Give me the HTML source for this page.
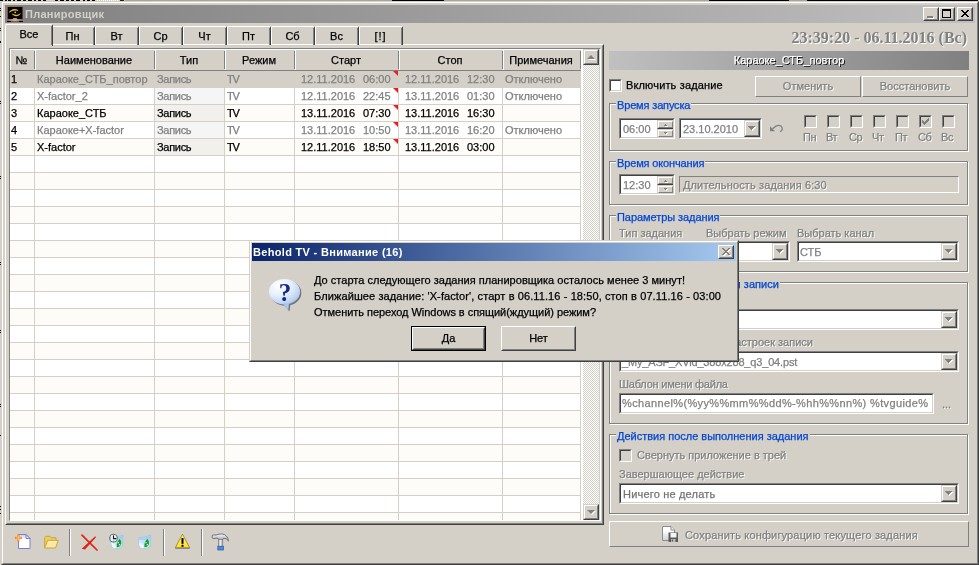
<!DOCTYPE html><html><head><meta charset="utf-8"><title>Планировщик</title><style>
*{margin:0;padding:0;box-sizing:border-box}
html,body{width:979px;height:565px;overflow:hidden}
body{background:#d4d0c8;font-family:"Liberation Sans",sans-serif;font-size:11px;color:#000;position:relative;will-change:transform;-webkit-text-stroke:0.25px}
#ttl,#dttl,#clock{-webkit-text-stroke:0}
.a{position:absolute}
.t{position:absolute;white-space:nowrap;line-height:13px;height:13px}
.dis{color:#808080;text-shadow:1px 1px 0 #fff}
.g{color:#808080}
.blue{color:#0046d5}
.win{position:absolute;border:1px solid;border-color:#d4d0c8 #404040 #404040 #d4d0c8}
.win:before{content:"";position:absolute;left:0;top:0;right:0;bottom:0;border:1px solid;border-color:#fff #808080 #808080 #fff}
.btn{position:absolute;background:#d4d0c8;border:1px solid;border-color:#fff #404040 #404040 #fff}
.btn:before{content:"";position:absolute;left:0;top:0;right:0;bottom:0;border:1px solid;border-color:#d4d0c8 #808080 #808080 #d4d0c8}
.sbtn{position:absolute;background:#d4d0c8;border:1px solid;border-color:#d4d0c8 #404040 #404040 #d4d0c8}
.sbtn:before{content:"";position:absolute;left:0;top:0;right:0;bottom:0;border:1px solid;border-color:#fff #808080 #808080 #fff}
.flat{position:absolute;background:#d4d0c8;border:1px solid;border-color:#fff #808080 #808080 #fff}
.sunk{position:absolute;background:#fff;border:1px solid;border-color:#808080 #fff #fff #808080}
.sunk:before{content:"";position:absolute;left:0;top:0;right:0;bottom:0;border:1px solid;border-color:#404040 #d4d0c8 #d4d0c8 #404040}
.gb{position:absolute;border:1px solid #808080;box-shadow:1px 1px 0 #fff, inset 1px 1px 0 #fff}
.gbt{position:absolute;background:#d4d0c8;white-space:nowrap;line-height:13px;height:13px;color:#0046d5;padding:0 1px}
.cb{position:absolute;width:13px;height:13px;background:#fff;border:1px solid;border-color:#808080 #fff #fff #808080}
.cb:before{content:"";position:absolute;left:0;top:0;right:0;bottom:0;border:1px solid;border-color:#404040 #d4d0c8 #d4d0c8 #404040}
.cb.d{background:#d4d0c8}
.tab{position:absolute;top:26px;height:19px;width:44px;border-top:1px solid #fff;border-left:1px solid #fff;border-right:1px solid #404040;border-radius:2px 2px 0 0;text-align:center;line-height:19px;padding-right:1px}
.tab:before{content:"";position:absolute;right:0;top:1px;bottom:0;width:1px;background:#808080}
.hd{position:absolute;top:49px;height:21px;border-top:1px solid #fff;border-left:1px solid #fff;text-align:center;line-height:21px;padding-right:3px}
.hd:after{content:"";position:absolute;right:0;top:1px;height:18px;width:1px;background:#808080}
.row{position:absolute;left:10px;width:571px;height:17px;border-bottom:1px solid #d4d0c8;overflow:hidden}
.c{position:absolute;top:0;height:16px;line-height:17px;white-space:nowrap;padding-left:2px;border-left:1px solid #d4d0c8;overflow:hidden}
.tri{position:absolute;width:0;height:0;border-top:5px solid #ee1c1c;border-left:5px solid transparent}
.arrow{position:absolute;width:0;height:0;border-left:4px solid transparent;border-right:4px solid transparent;border-top:4px solid #000}
</style></head><body>
<div class="a" style="left:0;top:0;width:979px;height:1px;background:#d4d0c8"></div>
<div class="a" style="left:125px;top:0;width:853px;height:1px;background:#a9a69f"></div>
<div class="a" style="left:392px;top:0;width:52px;height:1px;background:#000"></div>
<div class="a" style="left:709px;top:0;width:80px;height:1px;background:#000"></div>
<div class="a" style="left:807px;top:0;width:171px;height:1px;background:#000"></div>
<div class="a" style="left:0px;top:0;width:3px;height:1px;background:#000"></div>
<div class="a" style="left:5px;top:0;width:2px;height:1px;background:#000"></div>
<div class="a" style="left:8px;top:0;width:3px;height:1px;background:#000"></div>
<div class="a" style="left:13px;top:0;width:2px;height:1px;background:#000"></div>
<div class="a" style="left:17px;top:0;width:4px;height:1px;background:#000"></div>
<div class="a" style="left:23px;top:0;width:3px;height:1px;background:#000"></div>
<div class="a" style="left:28px;top:0;width:4px;height:1px;background:#000"></div>
<div class="a" style="left:34px;top:0;width:2px;height:1px;background:#000"></div>
<div class="a" style="left:38px;top:0;width:3px;height:1px;background:#000"></div>
<div class="a" style="left:43px;top:0;width:3px;height:1px;background:#000"></div>
<div class="a" style="left:55px;top:0;width:3px;height:1px;background:#000"></div>
<div class="a" style="left:60px;top:0;width:4px;height:1px;background:#000"></div>
<div class="a" style="left:66px;top:0;width:3px;height:1px;background:#000"></div>
<div class="a" style="left:71px;top:0;width:3px;height:1px;background:#000"></div>
<div class="a" style="left:76px;top:0;width:4px;height:1px;background:#000"></div>
<div class="a" style="left:83px;top:0;width:2px;height:1px;background:#000"></div>
<div class="a" style="left:87px;top:0;width:3px;height:1px;background:#000"></div>
<div class="a" style="left:92px;top:0;width:3px;height:1px;background:#000"></div>
<div class="a" style="left:97px;top:0;width:1px;height:1px;background:#fff"></div>
<div class="a" style="left:99px;top:0;width:1px;height:1px;background:#fff"></div>
<div class="a" style="left:101px;top:0;width:1px;height:1px;background:#fff"></div>
<div class="a" style="left:103px;top:0;width:1px;height:1px;background:#fff"></div>
<div class="a" style="left:105px;top:0;width:1px;height:1px;background:#fff"></div>
<div class="a" style="left:107px;top:0;width:1px;height:1px;background:#fff"></div>
<div class="a" style="left:109px;top:0;width:1px;height:1px;background:#fff"></div>
<div class="a" style="left:111px;top:0;width:1px;height:1px;background:#fff"></div>
<div class="a" style="left:113px;top:0;width:1px;height:1px;background:#fff"></div>
<div class="a" style="left:115px;top:0;width:1px;height:1px;background:#fff"></div>
<div class="a" style="left:117px;top:0;width:1px;height:1px;background:#fff"></div>
<div class="a" style="left:120px;top:0;width:4px;height:1px;background:#202020"></div>
<div class="a" style="left:0;top:8px;width:1px;height:1px;background:#111"></div>
<div class="a" style="left:0;top:10px;width:1px;height:1px;background:#111"></div>
<div class="a" style="left:0;top:16px;width:1px;height:1px;background:#111"></div>
<div class="a" style="left:0;top:28px;width:1px;height:1px;background:#111"></div>
<div class="a" style="left:0;top:30px;width:1px;height:1px;background:#111"></div>
<div class="a" style="left:0;top:41px;width:1px;height:1px;background:#111"></div>
<div class="a" style="left:0;top:42px;width:1px;height:1px;background:#111"></div>
<div class="a" style="left:0;top:101px;width:1px;height:1px;background:#111"></div>
<div class="a" style="left:0;top:103px;width:1px;height:1px;background:#111"></div>
<div class="a" style="left:0;top:176px;width:1px;height:1px;background:#111"></div>
<div class="a" style="left:0;top:178px;width:1px;height:1px;background:#111"></div>
<div class="a" style="left:0;top:262px;width:1px;height:1px;background:#111"></div>
<div class="a" style="left:0;top:264px;width:1px;height:1px;background:#111"></div>
<div class="a" style="left:0;top:330px;width:1px;height:1px;background:#111"></div>
<div class="a" style="left:0;top:332px;width:1px;height:1px;background:#111"></div>
<div class="a" style="left:0;top:404px;width:1px;height:1px;background:#111"></div>
<div class="a" style="left:0;top:406px;width:1px;height:1px;background:#111"></div>
<div class="a" style="left:0;top:435px;width:1px;height:1px;background:#111"></div>
<div class="a" style="left:0;top:506px;width:1px;height:1px;background:#111"></div>
<div class="a" style="left:0;top:509px;width:1px;height:1px;background:#111"></div>
<div class="a" style="left:0;top:513px;width:1px;height:1px;background:#111"></div>
<div class="win" style="left:1px;top:1px;width:978px;height:564px"></div>
<div class="a" style="left:5px;top:5px;width:970px;height:18px;background:linear-gradient(90deg,#808080,#c0c0c0)"></div>
<svg class="a" style="left:7px;top:6px" width="16" height="16" viewBox="0 0 16 16"><defs><linearGradient id="ib" x1="0" x2="1"><stop offset="0" stop-color="#9a6048"/><stop offset="0.5" stop-color="#c9b0ae"/><stop offset="1" stop-color="#8a5a48"/></linearGradient><linearGradient id="it" x1="0" x2="1"><stop offset="0" stop-color="#b86c48"/><stop offset="1" stop-color="#77706c"/></linearGradient></defs><rect width="16" height="16" fill="#000"/><rect width="16" height="1" fill="url(#it)"/><rect x="0" y="1" width="1" height="12" fill="#7a5044"/><rect x="15" y="1" width="1" height="12" fill="#4a3a38"/><rect x="0" y="13" width="16" height="2" fill="url(#ib)"/><rect x="4" y="15" width="8" height="1" fill="#6a6462"/><rect x="6" y="12" width="4" height="1" fill="#c2a02e"/><path d="M1.800 6.800C2.500 4.500 5.500 2.600 8.500 3C10.200 3.300 11.200 4.200 11.600 5.200C10 4.300 7.500 4.200 5.500 5C4 5.600 2.800 6.500 1.800 6.800Z" fill="#d9b045"/><path d="M4.600 7.300C6.500 8.600 9 9 11 8.400C12.300 8 13.200 7.300 13.800 6.700C13.600 8.600 11.500 10.300 9 10.200C7 10.100 5.300 9 4.600 7.300Z" fill="#d9b045"/><circle cx="8.300" cy="6.300" r="0.900" fill="#e6c25a"/></svg>
<div class="t" style="left:25px;top:8px;font-weight:bold;color:#d4d0c8;font-size:11px;letter-spacing:0.283px;" id="ttl">Планировщик</div>
<div class="btn" style="left:923px;top:7px;width:16px;height:14px"></div>
<div class="btn" style="left:939px;top:7px;width:16px;height:14px"></div>
<div class="btn" style="left:957px;top:7px;width:16px;height:14px"></div>
<div class="a" style="left:928px;top:17px;width:6px;height:2px;background:#fff"></div><div class="a" style="left:927px;top:16px;width:6px;height:2px;background:#808080"></div>
<div class="a" style="left:942px;top:9px;width:9px;height:9px;border:1px solid #000;border-top-width:2px"></div>
<svg class="a" style="left:961px;top:10px" width="8" height="7" viewBox="0 0 8 7" shape-rendering="crispEdges"><path d="M0 0h2v1h-2zM6 0h2v1h-2zM1 1h2v1h-2zM5 1h2v1h-2zM2 2h4v1h-4zM3 3h2v1h-2zM2 4h4v1h-4zM1 5h2v1h-2zM5 5h2v1h-2zM0 6h2v1h-2zM6 6h2v1h-2z" fill="#000"/></svg>
<div class="t" id="clock" style="right:12px;top:28px;height:20px;line-height:20px;font-family:'Liberation Serif',serif;font-weight:bold;font-size:16px;color:#808080;text-shadow:1px 1px 0 #fff">23:39:20 - 06.11.2016 (Вс)</div>
<div class="a" style="left:5px;top:44px;width:599px;height:481px;border:1px solid;border-color:#fff #404040 #404040 #fff"></div>
<div class="a" style="left:6px;top:45px;width:597px;height:479px;border:1px solid;border-color:#d4d0c8 #808080 #808080 #d4d0c8"></div>
<div class="tab" style="left:51px">Пн</div>
<div class="tab" style="left:95px">Вт</div>
<div class="tab" style="left:139px">Ср</div>
<div class="tab" style="left:183px">Чт</div>
<div class="tab" style="left:227px">Пт</div>
<div class="tab" style="left:271px">Сб</div>
<div class="tab" style="left:315px">Вс</div>
<div class="tab" style="left:359px;letter-spacing:1px">[!]</div>
<div class="a" style="left:5px;top:24px;width:48px;height:22px;background:#d4d0c8;border-top:1px solid #fff;border-left:1px solid #fff;border-right:1px solid #404040;border-radius:2px 2px 0 0;text-align:center;line-height:19px"><div class="a" style="right:0;top:1px;bottom:1px;width:1px;background:#808080"></div>Все</div>
<div class="a" style="left:9px;top:48px;width:592px;height:473px;border:1px solid;border-color:#808080 #fff #fff #808080;background:#fff"></div>
<div class="a" style="left:599px;top:49px;width:1px;height:471px;background:#d4d0c8"></div>
<div class="a" style="left:10px;top:49px;width:571px;height:22px;background:#d4d0c8;border-bottom:1px solid #808080"></div>
<div class="hd" style="left:10px;width:25px">№</div>
<div class="hd" style="left:35px;width:120px">Наименование</div>
<div class="hd" style="left:155px;width:70px">Тип</div>
<div class="hd" style="left:225px;width:70px">Режим</div>
<div class="hd" style="left:295px;width:104px">Старт</div>
<div class="hd" style="left:399px;width:104px">Стоп</div>
<div class="hd" style="left:503px;width:78px">Примечания</div>
<div class="row" style="top:71px;height:17px;background:#d4d0c8;border-bottom-color:#d4d0c8;">
<div class="c" style="left:0;width:24px;border-left:0;padding-left:1px;color:#000">1</div>
<div class="c" style="left:24px;width:120px;color:#808080;border-left-color:#d4d0c8;">Караоке_СТБ_повтор</div>
<div class="c" style="left:144px;width:70px;color:#808080;border-left-color:#d4d0c8;letter-spacing:-0.3px;">Запись</div>
<div class="c" style="left:214px;width:70px;color:#808080;border-left-color:#d4d0c8;letter-spacing:-1.2px;">TV</div>
<div class="c" style="left:284px;width:104px;color:#808080;border-left-color:#d4d0c8;"><span class="a" style="left:6px">12.11.2016</span><span class="a" style="left:68px">06:00</span><div class="tri" style="right:0;top:0"></div></div>
<div class="c" style="left:388px;width:104px;color:#808080;border-left-color:#d4d0c8;"><span class="a" style="left:6px">12.11.2016</span><span class="a" style="left:68px">12:30</span></div>
<div class="c" style="left:492px;width:79px;color:#808080;border-left-color:#d4d0c8;border-right:1px solid #d4d0c8;">Отключено</div>
</div>
<div class="row" style="top:88px;height:17px;background:#fff;border-bottom-color:#d4d0c8;">
<div class="c" style="left:0;width:24px;border-left:0;padding-left:1px;color:#000">2</div>
<div class="c" style="left:24px;width:120px;color:#808080;border-left-color:#d4d0c8;">X-factor_2</div>
<div class="c" style="left:144px;width:70px;color:#808080;border-left-color:#d4d0c8;background:#f5f5f5;letter-spacing:-0.3px;">Запись</div>
<div class="c" style="left:214px;width:70px;color:#808080;border-left-color:#d4d0c8;letter-spacing:-1.2px;">TV</div>
<div class="c" style="left:284px;width:104px;color:#808080;border-left-color:#d4d0c8;"><span class="a" style="left:6px">12.11.2016</span><span class="a" style="left:68px">22:45</span><div class="tri" style="right:0;top:0"></div></div>
<div class="c" style="left:388px;width:104px;color:#808080;border-left-color:#d4d0c8;"><span class="a" style="left:6px">13.11.2016</span><span class="a" style="left:68px">01:30</span></div>
<div class="c" style="left:492px;width:79px;color:#808080;border-left-color:#d4d0c8;border-right:1px solid #d4d0c8;">Отключено</div>
</div>
<div class="row" style="top:105px;height:17px;background:#fdfcf8;border-bottom-color:#d4d0c8;">
<div class="c" style="left:0;width:24px;border-left:0;padding-left:1px;color:#000">3</div>
<div class="c" style="left:24px;width:120px;color:#000;border-left-color:#d4d0c8;">Караоке_СТБ</div>
<div class="c" style="left:144px;width:70px;color:#000;border-left-color:#d4d0c8;background:#f1f0ec;letter-spacing:-0.3px;">Запись</div>
<div class="c" style="left:214px;width:70px;color:#000;border-left-color:#d4d0c8;letter-spacing:-1.2px;">TV</div>
<div class="c" style="left:284px;width:104px;color:#000;border-left-color:#d4d0c8;"><span class="a" style="left:6px">13.11.2016</span><span class="a" style="left:68px">07:30</span><div class="tri" style="right:0;top:0"></div></div>
<div class="c" style="left:388px;width:104px;color:#000;border-left-color:#d4d0c8;"><span class="a" style="left:6px">13.11.2016</span><span class="a" style="left:68px">16:30</span></div>
<div class="c" style="left:492px;width:79px;color:#000;border-left-color:#d4d0c8;border-right:1px solid #d4d0c8;"></div>
</div>
<div class="row" style="top:122px;height:17px;background:#fff;border-bottom-color:#d4d0c8;">
<div class="c" style="left:0;width:24px;border-left:0;padding-left:1px;color:#000">4</div>
<div class="c" style="left:24px;width:120px;color:#808080;border-left-color:#d4d0c8;">Караоке+X-factor</div>
<div class="c" style="left:144px;width:70px;color:#808080;border-left-color:#d4d0c8;background:#f5f5f5;letter-spacing:-0.3px;">Запись</div>
<div class="c" style="left:214px;width:70px;color:#808080;border-left-color:#d4d0c8;letter-spacing:-1.2px;">TV</div>
<div class="c" style="left:284px;width:104px;color:#808080;border-left-color:#d4d0c8;"><span class="a" style="left:6px">13.11.2016</span><span class="a" style="left:68px">10:50</span><div class="tri" style="right:0;top:0"></div></div>
<div class="c" style="left:388px;width:104px;color:#808080;border-left-color:#d4d0c8;"><span class="a" style="left:6px">13.11.2016</span><span class="a" style="left:68px">16:20</span></div>
<div class="c" style="left:492px;width:79px;color:#808080;border-left-color:#d4d0c8;border-right:1px solid #d4d0c8;">Отключено</div>
</div>
<div class="row" style="top:139px;height:17px;background:#fdfcf8;border-bottom-color:#d4d0c8;">
<div class="c" style="left:0;width:24px;border-left:0;padding-left:1px;color:#000">5</div>
<div class="c" style="left:24px;width:120px;color:#000;border-left-color:#d4d0c8;">X-factor</div>
<div class="c" style="left:144px;width:70px;color:#000;border-left-color:#d4d0c8;background:#f1f0ec;letter-spacing:-0.3px;">Запись</div>
<div class="c" style="left:214px;width:70px;color:#000;border-left-color:#d4d0c8;letter-spacing:-1.2px;">TV</div>
<div class="c" style="left:284px;width:104px;color:#000;border-left-color:#d4d0c8;"><span class="a" style="left:6px">12.11.2016</span><span class="a" style="left:68px">18:50</span><div class="tri" style="right:0;top:0"></div></div>
<div class="c" style="left:388px;width:104px;color:#000;border-left-color:#d4d0c8;"><span class="a" style="left:6px">13.11.2016</span><span class="a" style="left:68px">03:00</span></div>
<div class="c" style="left:492px;width:79px;color:#000;border-left-color:#d4d0c8;border-right:1px solid #d4d0c8;"></div>
</div>
<div class="row" style="top:156px;height:17px;background:#fff;border-bottom-color:#d4d0c8;">
<div class="c" style="left:24px;width:120px;color:#000;border-left-color:#d4d0c8;"></div>
<div class="c" style="left:144px;width:70px;color:#000;border-left-color:#d4d0c8;letter-spacing:-0.3px;"></div>
<div class="c" style="left:214px;width:70px;color:#000;border-left-color:#d4d0c8;letter-spacing:-1.2px;"></div>
<div class="c" style="left:284px;width:104px;color:#000;border-left-color:#d4d0c8;"></div>
<div class="c" style="left:388px;width:104px;color:#000;border-left-color:#d4d0c8;"></div>
<div class="c" style="left:492px;width:79px;color:#000;border-left-color:#d4d0c8;border-right:1px solid #d4d0c8;"></div>
</div>
<div class="row" style="top:173px;height:17px;background:#fdfcf8;border-bottom-color:#d4d0c8;">
<div class="c" style="left:24px;width:120px;color:#000;border-left-color:#d4d0c8;"></div>
<div class="c" style="left:144px;width:70px;color:#000;border-left-color:#d4d0c8;letter-spacing:-0.3px;"></div>
<div class="c" style="left:214px;width:70px;color:#000;border-left-color:#d4d0c8;letter-spacing:-1.2px;"></div>
<div class="c" style="left:284px;width:104px;color:#000;border-left-color:#d4d0c8;"></div>
<div class="c" style="left:388px;width:104px;color:#000;border-left-color:#d4d0c8;"></div>
<div class="c" style="left:492px;width:79px;color:#000;border-left-color:#d4d0c8;border-right:1px solid #d4d0c8;"></div>
</div>
<div class="row" style="top:190px;height:17px;background:#fff;border-bottom-color:#d4d0c8;">
<div class="c" style="left:24px;width:120px;color:#000;border-left-color:#d4d0c8;"></div>
<div class="c" style="left:144px;width:70px;color:#000;border-left-color:#d4d0c8;letter-spacing:-0.3px;"></div>
<div class="c" style="left:214px;width:70px;color:#000;border-left-color:#d4d0c8;letter-spacing:-1.2px;"></div>
<div class="c" style="left:284px;width:104px;color:#000;border-left-color:#d4d0c8;"></div>
<div class="c" style="left:388px;width:104px;color:#000;border-left-color:#d4d0c8;"></div>
<div class="c" style="left:492px;width:79px;color:#000;border-left-color:#d4d0c8;border-right:1px solid #d4d0c8;"></div>
</div>
<div class="row" style="top:207px;height:17px;background:#fdfcf8;border-bottom-color:#d4d0c8;">
<div class="c" style="left:24px;width:120px;color:#000;border-left-color:#d4d0c8;"></div>
<div class="c" style="left:144px;width:70px;color:#000;border-left-color:#d4d0c8;letter-spacing:-0.3px;"></div>
<div class="c" style="left:214px;width:70px;color:#000;border-left-color:#d4d0c8;letter-spacing:-1.2px;"></div>
<div class="c" style="left:284px;width:104px;color:#000;border-left-color:#d4d0c8;"></div>
<div class="c" style="left:388px;width:104px;color:#000;border-left-color:#d4d0c8;"></div>
<div class="c" style="left:492px;width:79px;color:#000;border-left-color:#d4d0c8;border-right:1px solid #d4d0c8;"></div>
</div>
<div class="row" style="top:224px;height:17px;background:#fff;border-bottom-color:#d4d0c8;">
<div class="c" style="left:24px;width:120px;color:#000;border-left-color:#d4d0c8;"></div>
<div class="c" style="left:144px;width:70px;color:#000;border-left-color:#d4d0c8;letter-spacing:-0.3px;"></div>
<div class="c" style="left:214px;width:70px;color:#000;border-left-color:#d4d0c8;letter-spacing:-1.2px;"></div>
<div class="c" style="left:284px;width:104px;color:#000;border-left-color:#d4d0c8;"></div>
<div class="c" style="left:388px;width:104px;color:#000;border-left-color:#d4d0c8;"></div>
<div class="c" style="left:492px;width:79px;color:#000;border-left-color:#d4d0c8;border-right:1px solid #d4d0c8;"></div>
</div>
<div class="row" style="top:241px;height:17px;background:#fdfcf8;border-bottom-color:#d4d0c8;">
<div class="c" style="left:24px;width:120px;color:#000;border-left-color:#d4d0c8;"></div>
<div class="c" style="left:144px;width:70px;color:#000;border-left-color:#d4d0c8;letter-spacing:-0.3px;"></div>
<div class="c" style="left:214px;width:70px;color:#000;border-left-color:#d4d0c8;letter-spacing:-1.2px;"></div>
<div class="c" style="left:284px;width:104px;color:#000;border-left-color:#d4d0c8;"></div>
<div class="c" style="left:388px;width:104px;color:#000;border-left-color:#d4d0c8;"></div>
<div class="c" style="left:492px;width:79px;color:#000;border-left-color:#d4d0c8;border-right:1px solid #d4d0c8;"></div>
</div>
<div class="row" style="top:258px;height:17px;background:#fff;border-bottom-color:#d4d0c8;">
<div class="c" style="left:24px;width:120px;color:#000;border-left-color:#d4d0c8;"></div>
<div class="c" style="left:144px;width:70px;color:#000;border-left-color:#d4d0c8;letter-spacing:-0.3px;"></div>
<div class="c" style="left:214px;width:70px;color:#000;border-left-color:#d4d0c8;letter-spacing:-1.2px;"></div>
<div class="c" style="left:284px;width:104px;color:#000;border-left-color:#d4d0c8;"></div>
<div class="c" style="left:388px;width:104px;color:#000;border-left-color:#d4d0c8;"></div>
<div class="c" style="left:492px;width:79px;color:#000;border-left-color:#d4d0c8;border-right:1px solid #d4d0c8;"></div>
</div>
<div class="row" style="top:275px;height:17px;background:#fdfcf8;border-bottom-color:#d4d0c8;">
<div class="c" style="left:24px;width:120px;color:#000;border-left-color:#d4d0c8;"></div>
<div class="c" style="left:144px;width:70px;color:#000;border-left-color:#d4d0c8;letter-spacing:-0.3px;"></div>
<div class="c" style="left:214px;width:70px;color:#000;border-left-color:#d4d0c8;letter-spacing:-1.2px;"></div>
<div class="c" style="left:284px;width:104px;color:#000;border-left-color:#d4d0c8;"></div>
<div class="c" style="left:388px;width:104px;color:#000;border-left-color:#d4d0c8;"></div>
<div class="c" style="left:492px;width:79px;color:#000;border-left-color:#d4d0c8;border-right:1px solid #d4d0c8;"></div>
</div>
<div class="row" style="top:292px;height:17px;background:#fff;border-bottom-color:#d4d0c8;">
<div class="c" style="left:24px;width:120px;color:#000;border-left-color:#d4d0c8;"></div>
<div class="c" style="left:144px;width:70px;color:#000;border-left-color:#d4d0c8;letter-spacing:-0.3px;"></div>
<div class="c" style="left:214px;width:70px;color:#000;border-left-color:#d4d0c8;letter-spacing:-1.2px;"></div>
<div class="c" style="left:284px;width:104px;color:#000;border-left-color:#d4d0c8;"></div>
<div class="c" style="left:388px;width:104px;color:#000;border-left-color:#d4d0c8;"></div>
<div class="c" style="left:492px;width:79px;color:#000;border-left-color:#d4d0c8;border-right:1px solid #d4d0c8;"></div>
</div>
<div class="row" style="top:309px;height:17px;background:#fdfcf8;border-bottom-color:#d4d0c8;">
<div class="c" style="left:24px;width:120px;color:#000;border-left-color:#d4d0c8;"></div>
<div class="c" style="left:144px;width:70px;color:#000;border-left-color:#d4d0c8;letter-spacing:-0.3px;"></div>
<div class="c" style="left:214px;width:70px;color:#000;border-left-color:#d4d0c8;letter-spacing:-1.2px;"></div>
<div class="c" style="left:284px;width:104px;color:#000;border-left-color:#d4d0c8;"></div>
<div class="c" style="left:388px;width:104px;color:#000;border-left-color:#d4d0c8;"></div>
<div class="c" style="left:492px;width:79px;color:#000;border-left-color:#d4d0c8;border-right:1px solid #d4d0c8;"></div>
</div>
<div class="row" style="top:326px;height:17px;background:#fff;border-bottom-color:#d4d0c8;">
<div class="c" style="left:24px;width:120px;color:#000;border-left-color:#d4d0c8;"></div>
<div class="c" style="left:144px;width:70px;color:#000;border-left-color:#d4d0c8;letter-spacing:-0.3px;"></div>
<div class="c" style="left:214px;width:70px;color:#000;border-left-color:#d4d0c8;letter-spacing:-1.2px;"></div>
<div class="c" style="left:284px;width:104px;color:#000;border-left-color:#d4d0c8;"></div>
<div class="c" style="left:388px;width:104px;color:#000;border-left-color:#d4d0c8;"></div>
<div class="c" style="left:492px;width:79px;color:#000;border-left-color:#d4d0c8;border-right:1px solid #d4d0c8;"></div>
</div>
<div class="row" style="top:343px;height:17px;background:#fdfcf8;border-bottom-color:#d4d0c8;">
<div class="c" style="left:24px;width:120px;color:#000;border-left-color:#d4d0c8;"></div>
<div class="c" style="left:144px;width:70px;color:#000;border-left-color:#d4d0c8;letter-spacing:-0.3px;"></div>
<div class="c" style="left:214px;width:70px;color:#000;border-left-color:#d4d0c8;letter-spacing:-1.2px;"></div>
<div class="c" style="left:284px;width:104px;color:#000;border-left-color:#d4d0c8;"></div>
<div class="c" style="left:388px;width:104px;color:#000;border-left-color:#d4d0c8;"></div>
<div class="c" style="left:492px;width:79px;color:#000;border-left-color:#d4d0c8;border-right:1px solid #d4d0c8;"></div>
</div>
<div class="row" style="top:360px;height:17px;background:#fff;border-bottom-color:#d4d0c8;">
<div class="c" style="left:24px;width:120px;color:#000;border-left-color:#d4d0c8;"></div>
<div class="c" style="left:144px;width:70px;color:#000;border-left-color:#d4d0c8;letter-spacing:-0.3px;"></div>
<div class="c" style="left:214px;width:70px;color:#000;border-left-color:#d4d0c8;letter-spacing:-1.2px;"></div>
<div class="c" style="left:284px;width:104px;color:#000;border-left-color:#d4d0c8;"></div>
<div class="c" style="left:388px;width:104px;color:#000;border-left-color:#d4d0c8;"></div>
<div class="c" style="left:492px;width:79px;color:#000;border-left-color:#d4d0c8;border-right:1px solid #d4d0c8;"></div>
</div>
<div class="row" style="top:377px;height:17px;background:#fdfcf8;border-bottom-color:#d4d0c8;">
<div class="c" style="left:24px;width:120px;color:#000;border-left-color:#d4d0c8;"></div>
<div class="c" style="left:144px;width:70px;color:#000;border-left-color:#d4d0c8;letter-spacing:-0.3px;"></div>
<div class="c" style="left:214px;width:70px;color:#000;border-left-color:#d4d0c8;letter-spacing:-1.2px;"></div>
<div class="c" style="left:284px;width:104px;color:#000;border-left-color:#d4d0c8;"></div>
<div class="c" style="left:388px;width:104px;color:#000;border-left-color:#d4d0c8;"></div>
<div class="c" style="left:492px;width:79px;color:#000;border-left-color:#d4d0c8;border-right:1px solid #d4d0c8;"></div>
</div>
<div class="row" style="top:394px;height:17px;background:#fff;border-bottom-color:#d4d0c8;">
<div class="c" style="left:24px;width:120px;color:#000;border-left-color:#d4d0c8;"></div>
<div class="c" style="left:144px;width:70px;color:#000;border-left-color:#d4d0c8;letter-spacing:-0.3px;"></div>
<div class="c" style="left:214px;width:70px;color:#000;border-left-color:#d4d0c8;letter-spacing:-1.2px;"></div>
<div class="c" style="left:284px;width:104px;color:#000;border-left-color:#d4d0c8;"></div>
<div class="c" style="left:388px;width:104px;color:#000;border-left-color:#d4d0c8;"></div>
<div class="c" style="left:492px;width:79px;color:#000;border-left-color:#d4d0c8;border-right:1px solid #d4d0c8;"></div>
</div>
<div class="row" style="top:411px;height:17px;background:#fdfcf8;border-bottom-color:#d4d0c8;">
<div class="c" style="left:24px;width:120px;color:#000;border-left-color:#d4d0c8;"></div>
<div class="c" style="left:144px;width:70px;color:#000;border-left-color:#d4d0c8;letter-spacing:-0.3px;"></div>
<div class="c" style="left:214px;width:70px;color:#000;border-left-color:#d4d0c8;letter-spacing:-1.2px;"></div>
<div class="c" style="left:284px;width:104px;color:#000;border-left-color:#d4d0c8;"></div>
<div class="c" style="left:388px;width:104px;color:#000;border-left-color:#d4d0c8;"></div>
<div class="c" style="left:492px;width:79px;color:#000;border-left-color:#d4d0c8;border-right:1px solid #d4d0c8;"></div>
</div>
<div class="row" style="top:428px;height:17px;background:#fff;border-bottom-color:#d4d0c8;">
<div class="c" style="left:24px;width:120px;color:#000;border-left-color:#d4d0c8;"></div>
<div class="c" style="left:144px;width:70px;color:#000;border-left-color:#d4d0c8;letter-spacing:-0.3px;"></div>
<div class="c" style="left:214px;width:70px;color:#000;border-left-color:#d4d0c8;letter-spacing:-1.2px;"></div>
<div class="c" style="left:284px;width:104px;color:#000;border-left-color:#d4d0c8;"></div>
<div class="c" style="left:388px;width:104px;color:#000;border-left-color:#d4d0c8;"></div>
<div class="c" style="left:492px;width:79px;color:#000;border-left-color:#d4d0c8;border-right:1px solid #d4d0c8;"></div>
</div>
<div class="row" style="top:445px;height:17px;background:#fdfcf8;border-bottom-color:#d4d0c8;">
<div class="c" style="left:24px;width:120px;color:#000;border-left-color:#d4d0c8;"></div>
<div class="c" style="left:144px;width:70px;color:#000;border-left-color:#d4d0c8;letter-spacing:-0.3px;"></div>
<div class="c" style="left:214px;width:70px;color:#000;border-left-color:#d4d0c8;letter-spacing:-1.2px;"></div>
<div class="c" style="left:284px;width:104px;color:#000;border-left-color:#d4d0c8;"></div>
<div class="c" style="left:388px;width:104px;color:#000;border-left-color:#d4d0c8;"></div>
<div class="c" style="left:492px;width:79px;color:#000;border-left-color:#d4d0c8;border-right:1px solid #d4d0c8;"></div>
</div>
<div class="row" style="top:462px;height:17px;background:#fff;border-bottom-color:#d4d0c8;">
<div class="c" style="left:24px;width:120px;color:#000;border-left-color:#d4d0c8;"></div>
<div class="c" style="left:144px;width:70px;color:#000;border-left-color:#d4d0c8;letter-spacing:-0.3px;"></div>
<div class="c" style="left:214px;width:70px;color:#000;border-left-color:#d4d0c8;letter-spacing:-1.2px;"></div>
<div class="c" style="left:284px;width:104px;color:#000;border-left-color:#d4d0c8;"></div>
<div class="c" style="left:388px;width:104px;color:#000;border-left-color:#d4d0c8;"></div>
<div class="c" style="left:492px;width:79px;color:#000;border-left-color:#d4d0c8;border-right:1px solid #d4d0c8;"></div>
</div>
<div class="row" style="top:479px;height:17px;background:#fdfcf8;border-bottom-color:#d4d0c8;">
<div class="c" style="left:24px;width:120px;color:#000;border-left-color:#d4d0c8;"></div>
<div class="c" style="left:144px;width:70px;color:#000;border-left-color:#d4d0c8;letter-spacing:-0.3px;"></div>
<div class="c" style="left:214px;width:70px;color:#000;border-left-color:#d4d0c8;letter-spacing:-1.2px;"></div>
<div class="c" style="left:284px;width:104px;color:#000;border-left-color:#d4d0c8;"></div>
<div class="c" style="left:388px;width:104px;color:#000;border-left-color:#d4d0c8;"></div>
<div class="c" style="left:492px;width:79px;color:#000;border-left-color:#d4d0c8;border-right:1px solid #d4d0c8;"></div>
</div>
<div class="row" style="top:496px;height:17px;background:#fff;border-bottom-color:#d4d0c8;">
<div class="c" style="left:24px;width:120px;color:#000;border-left-color:#d4d0c8;"></div>
<div class="c" style="left:144px;width:70px;color:#000;border-left-color:#d4d0c8;letter-spacing:-0.3px;"></div>
<div class="c" style="left:214px;width:70px;color:#000;border-left-color:#d4d0c8;letter-spacing:-1.2px;"></div>
<div class="c" style="left:284px;width:104px;color:#000;border-left-color:#d4d0c8;"></div>
<div class="c" style="left:388px;width:104px;color:#000;border-left-color:#d4d0c8;"></div>
<div class="c" style="left:492px;width:79px;color:#000;border-left-color:#d4d0c8;border-right:1px solid #d4d0c8;"></div>
</div>
<div class="row" style="top:513px;height:7px;background:#fdfcf8;border-bottom-color:#d4d0c8;border-bottom:0;">
<div class="c" style="left:24px;width:120px;color:#000;border-left-color:#d4d0c8;"></div>
<div class="c" style="left:144px;width:70px;color:#000;border-left-color:#d4d0c8;letter-spacing:-0.3px;"></div>
<div class="c" style="left:214px;width:70px;color:#000;border-left-color:#d4d0c8;letter-spacing:-1.2px;"></div>
<div class="c" style="left:284px;width:104px;color:#000;border-left-color:#d4d0c8;"></div>
<div class="c" style="left:388px;width:104px;color:#000;border-left-color:#d4d0c8;"></div>
<div class="c" style="left:492px;width:79px;color:#000;border-left-color:#d4d0c8;border-right:1px solid #d4d0c8;"></div>
</div>
<div class="a" style="left:583px;top:49px;width:16px;height:471px;background:#eae8e3;background-image:conic-gradient(#fff 25%,#d4d0c8 0 50%,#fff 0 75%,#d4d0c8 0);background-size:2px 2px"></div>
<div class="sbtn" style="left:583px;top:49px;width:16px;height:16px"></div>
<div class="a" style="left:588px;top:56px;width:0;height:0;border-left:4px solid transparent;border-right:4px solid transparent;border-bottom:4px solid #fff"></div><div class="a" style="left:587px;top:55px;width:0;height:0;border-left:4px solid transparent;border-right:4px solid transparent;border-bottom:4px solid #808080"></div>
<div class="sbtn" style="left:583px;top:504px;width:16px;height:16px"></div>
<div class="a" style="left:588px;top:511px;width:0;height:0;border-left:4px solid transparent;border-right:4px solid transparent;border-top:4px solid #fff"></div><div class="a" style="left:587px;top:510px;width:0;height:0;border-left:4px solid transparent;border-right:4px solid transparent;border-top:4px solid #808080"></div>
<div class="a" style="left:69px;top:529px;width:1px;height:27px;background:#808080"></div><div class="a" style="left:70px;top:529px;width:1px;height:27px;background:#fff"></div>
<div class="a" style="left:163px;top:529px;width:1px;height:27px;background:#808080"></div><div class="a" style="left:164px;top:529px;width:1px;height:27px;background:#fff"></div>
<div class="a" style="left:201px;top:529px;width:1px;height:27px;background:#808080"></div><div class="a" style="left:202px;top:529px;width:1px;height:27px;background:#fff"></div>
<svg class="a" style="left:14px;top:533px" width="18" height="17" viewBox="0 0 18 17"><defs><linearGradient id="pg" x1="0" y1="0" x2="0" y2="1"><stop offset="0" stop-color="#c2d2f2"/><stop offset="0.35" stop-color="#fff"/></linearGradient></defs><path d="M4.500 1.500H12L16 5.500V15.500H4.500Z" fill="url(#pg)" stroke="#7f7cc8"/><path d="M12 1.500V5.500H16Z" fill="#e4e9f8" stroke="#7f7cc8" stroke-linejoin="round"/><path d="M4.400 1.400v7M0.900 4.900h7" stroke="#f0861c" stroke-width="2.200"/><path d="M4.400 2.300v5.200M1.800 4.900h5.200" stroke="#ffdcae" stroke-width="0.700"/></svg>
<svg class="a" style="left:43px;top:535px" width="17" height="15" viewBox="0 0 17 15"><path d="M1.700 12.500V2.600L3 1.300H7L8.200 2.800H13V5.500" fill="#efce60" stroke="#c9a23a"/><path d="M1.700 13L4.600 5.400H15.300L12.500 13Z" fill="#fbe9a2" stroke="#c9a23a" stroke-linejoin="round"/><path d="M5.200 6.400H13.800" stroke="#fff6cc" stroke-width="0.800"/></svg>
<svg class="a" style="left:80px;top:534px" width="18" height="17" viewBox="0 0 18 17"><path d="M2 1.200L17 16" stroke="#e02010" stroke-width="1.700" stroke-linecap="round"/><path d="M15.200 2.300L16 3.200L5 15.600L1.700 14.800Z" fill="#e02010"/></svg>
<svg class="a" style="left:108px;top:533px" width="17" height="18" viewBox="0 0 17 18"><defs><linearGradient id="gl" x1="0" y1="1" x2="1" y2="0"><stop offset="0" stop-color="#eaf5ff"/><stop offset="0.5" stop-color="#c4e0f8"/><stop offset="1" stop-color="#a4d0f4"/></linearGradient></defs><g transform="translate(2.300,2)"><path d="M0.300 2.700L6 2.200L12.800 0.200L12.400 10.500Q11 13.300 8 13.600H3.800Q1.200 13 0.600 8Z" fill="url(#gl)" stroke="#8fc0ea" stroke-width="0.600"/><path d="M0.800 3.200L6 2.800L12.300 0.900L12.200 3.500Q6 5.500 0.900 5Z" fill="#9ccdf4" opacity="0.800"/><path d="M1 8Q4 7.500 6 11.500L5 13.200H3.800Q1.500 12.500 1 8Z" fill="#f2f9ff" opacity="0.900"/><path d="M9.300 3.800Q11.400 5.500 10.900 9Q10.200 12 6.500 12.300Q5.800 7.500 9.300 3.800Z" fill="#12a022"/><circle cx="8" cy="7.700" r="0.700" fill="#e8ffe8"/><circle cx="9.300" cy="9.800" r="0.800" fill="#e8ffe8"/></g><circle cx="5.500" cy="5.200" r="4" fill="#e6f2fe" stroke="#6c6c78" stroke-width="1"/><path d="M5.500 2.600V5.600H8" stroke="#181818" fill="none" stroke-width="1.100"/><path d="M5.500 1.700v0.900M5.500 7.800v0.900M2 5.200h0.900M8.100 5.200h0.900" stroke="#10a020" stroke-width="1"/></svg>
<svg class="a" style="left:138px;top:534px" width="16" height="17" viewBox="0 0 16 17"><g transform="translate(0,1)"><path d="M0.300 2.700L6 2.200L12.800 0.200L12.400 10.500Q11 13.300 8 13.600H3.800Q1.200 13 0.600 8Z" fill="url(#gl)" stroke="#8fc0ea" stroke-width="0.600"/><path d="M0.800 3.200L6 2.800L12.300 0.900L12.200 3.500Q6 5.500 0.900 5Z" fill="#9ccdf4" opacity="0.800"/><path d="M1 8Q4 7.500 6 11.500L5 13.200H3.800Q1.500 12.500 1 8Z" fill="#f2f9ff" opacity="0.900"/><path d="M9.300 3.800Q11.400 5.500 10.900 9Q10.200 12 6.500 12.300Q5.800 7.500 9.300 3.800Z" fill="#12a022"/><circle cx="8" cy="7.700" r="0.700" fill="#e8ffe8"/><circle cx="9.300" cy="9.800" r="0.800" fill="#e8ffe8"/></g></svg>
<svg class="a" style="left:174px;top:533px" width="17" height="16" viewBox="0 0 17 16"><defs><linearGradient id="wg" x1="0" y1="0" x2="0" y2="1"><stop offset="0" stop-color="#fff6a0"/><stop offset="1" stop-color="#ffdf20"/></linearGradient></defs><path d="M8.500 1.200L15.700 14.800H1.300Z" fill="url(#wg)" stroke="#a8901c" stroke-linejoin="round"/><path d="M1.300 15.300H15.700" stroke="#6a6aa0" stroke-width="0.800"/><path d="M8.500 5v5.800" stroke="#000" stroke-width="2"/><rect x="7.500" y="11.800" width="2" height="2" fill="#000"/></svg>
<svg class="a" style="left:211px;top:533px" width="19" height="18" viewBox="0 0 19 18"><defs><linearGradient id="hm" x1="0" y1="0" x2="0" y2="1"><stop offset="0" stop-color="#f4f4f8"/><stop offset="1" stop-color="#a4a4b0"/></linearGradient><linearGradient id="hh" x1="0" y1="0" x2="1" y2="0"><stop offset="0" stop-color="#9a9aa2"/><stop offset="0.4" stop-color="#f4f4f4"/><stop offset="1" stop-color="#9a9aa2"/></linearGradient></defs><path d="M1.200 3Q1 2 2.500 2L5 2Q8 0.800 11 1Q16.500 1.500 17.500 8Q15.500 5 12.500 5.200L12 6.400H7.200L6.800 5.200H5L2.500 5.600Q1.200 5.600 1.200 4.600Z" fill="url(#hm)" stroke="#5c5c68" stroke-width="0.800"/><rect x="7.400" y="6.400" width="4.400" height="7" fill="url(#hh)" stroke="#74747c" stroke-width="0.600"/><rect x="6.800" y="13.200" width="5.600" height="3.800" fill="#4a88dc" stroke="#2a5aa4" stroke-width="0.700"/></svg>
<div class="a" style="left:609px;top:51px;width:360px;height:19px;background:linear-gradient(90deg,#c0c0c0,#808080)"></div>
<div class="t" id="tname" style="left:609px;width:360px;top:54px;text-align:center;color:#fff;text-shadow:1px 1px 0 #000">Караоке_СТБ_повтор</div>
<div class="cb" style="left:609px;top:79px"></div>
<div class="t" id="l_enable" style="left:626px;top:79px;letter-spacing:0.144px;">Включить задание</div>
<div class="flat" style="left:755px;top:76px;width:106px;height:21px"></div><div class="t dis" style="left:755px;width:106px;top:80px;text-align:center">Отменить</div>
<div class="flat" style="left:862px;top:76px;width:106px;height:21px"></div><div class="t dis" style="left:862px;width:106px;top:80px;text-align:center">Восстановить</div>
<div class="gb" style="left:609px;top:103px;width:359px;height:48px"></div>
<div class="gbt" id="g1" style="left:616px;top:99px;letter-spacing:-0.152px;">Время запуска</div>
<div class="gb" style="left:609px;top:161px;width:359px;height:44px"></div>
<div class="gbt" id="g2" style="left:616px;top:157px;letter-spacing:-0.137px;">Время окончания</div>
<div class="gb" style="left:609px;top:215px;width:359px;height:57px"></div>
<div class="gbt" id="g3" style="left:616px;top:211px;letter-spacing:-0.067px;">Параметры задания</div>
<div class="gb" style="left:609px;top:282px;width:359px;height:142px"></div>
<div class="gbt" id="g4" style="left:616px;top:278px;letter-spacing:0.058px;">Параметры источника и записи</div>
<div class="gb" style="left:609px;top:434px;width:359px;height:80px"></div>
<div class="gbt" id="g5" style="left:616px;top:430px;letter-spacing:-0.007px;">Действия после выполнения задания</div>
<div class="sunk" style="left:619px;top:118px;width:56px;height:21px"></div>
<div class="t g" style="left:623px;top:123px">06:00</div>
<div class="a" style="left:657px;top:120px;width:16px;height:17px;overflow:hidden"><div class="sbtn" style="left:0;top:0;width:17px;height:9px"></div><div class="sbtn" style="left:0;top:9px;width:17px;height:9px"></div></div>
<svg class="a" style="left:665px;top:125px" width="3" height="2" viewBox="0 0 3 2" shape-rendering="crispEdges"><path d="M1 0h1v1h-1zM0 1h3v1h-3z" fill="#fff"/></svg><svg class="a" style="left:664px;top:124px" width="3" height="2" viewBox="0 0 3 2" shape-rendering="crispEdges"><path d="M1 0h1v1h-1zM0 1h3v1h-3z" fill="#808080"/></svg>
<svg class="a" style="left:665px;top:133px" width="3" height="2" viewBox="0 0 3 2" shape-rendering="crispEdges"><path d="M0 0h3v1h-3zM1 1h1v1h-1z" fill="#fff"/></svg><svg class="a" style="left:664px;top:132px" width="3" height="2" viewBox="0 0 3 2" shape-rendering="crispEdges"><path d="M0 0h3v1h-3zM1 1h1v1h-1z" fill="#808080"/></svg>
<div class="sunk" style="left:679px;top:118px;width:83px;height:21px"></div>
<div class="t g" style="left:683px;top:123px">23.10.2010</div>
<div class="sbtn" style="left:744px;top:120px;width:16px;height:17px"></div>
<svg class="a" style="left:749px;top:127px" width="7" height="4" viewBox="0 0 7 4" shape-rendering="crispEdges"><path d="M0 0h7v1h-7zM1 1h5v1h-5zM2 2h3v1h-3zM3 3h1v1h-1z" fill="#fff"/></svg><svg class="a" style="left:748px;top:126px" width="7" height="4" viewBox="0 0 7 4" shape-rendering="crispEdges"><path d="M0 0h7v1h-7zM1 1h5v1h-5zM2 2h3v1h-3zM3 3h1v1h-1z" fill="#808080"/></svg>
<svg class="a" style="left:769px;top:124px" width="15" height="10" viewBox="0 0 15 10"><path d="M1 2.200V7.300H6.100Z" fill="#808080"/><path d="M3.500 4.800L7.300 1.900Q10 0.700 12.200 2.200Q14 4.500 12.600 6.600L11.200 7.700" fill="none" stroke="#808080" stroke-width="1.300"/></svg>
<div class="cb d" style="left:804px;top:115px"></div>
<div class="t dis" style="left:803px;top:131px;letter-spacing:-0.4px">Пн</div>
<div class="cb d" style="left:827px;top:115px"></div>
<div class="t dis" style="left:826px;top:131px;letter-spacing:-0.4px">Вт</div>
<div class="cb d" style="left:850px;top:115px"></div>
<div class="t dis" style="left:849px;top:131px;letter-spacing:-0.4px">Ср</div>
<div class="cb d" style="left:873px;top:115px"></div>
<div class="t dis" style="left:872px;top:131px;letter-spacing:-0.4px">Чт</div>
<div class="cb d" style="left:896px;top:115px"></div>
<div class="t dis" style="left:895px;top:131px;letter-spacing:-0.4px">Пт</div>
<div class="cb d" style="left:919px;top:115px"></div>
<div class="t dis" style="left:918px;top:131px;letter-spacing:-0.4px">Сб</div>
<svg class="a" style="left:922px;top:118px" width="7" height="7" viewBox="0 0 7 7" shape-rendering="crispEdges"><path d="M6 0h1v1h-1zM5 1h1v1h-1zM6 1h1v1h-1zM0 2h1v1h-1zM4 2h1v1h-1zM5 2h1v1h-1zM6 2h1v1h-1zM0 3h1v1h-1zM1 3h1v1h-1zM3 3h1v1h-1zM4 3h1v1h-1zM5 3h1v1h-1zM0 4h1v1h-1zM1 4h1v1h-1zM2 4h1v1h-1zM3 4h1v1h-1zM4 4h1v1h-1zM1 5h1v1h-1zM2 5h1v1h-1zM3 5h1v1h-1zM2 6h1v1h-1z" fill="#808080"/></svg>
<div class="cb d" style="left:942px;top:115px"></div>
<div class="t dis" style="left:941px;top:131px;letter-spacing:-0.4px">Вс</div>
<div class="sunk" style="left:619px;top:174px;width:56px;height:21px"></div>
<div class="t g" style="left:623px;top:179px">12:30</div>
<div class="a" style="left:657px;top:176px;width:16px;height:17px;overflow:hidden"><div class="sbtn" style="left:0;top:0;width:17px;height:9px"></div><div class="sbtn" style="left:0;top:9px;width:17px;height:9px"></div></div>
<svg class="a" style="left:665px;top:181px" width="3" height="2" viewBox="0 0 3 2" shape-rendering="crispEdges"><path d="M1 0h1v1h-1zM0 1h3v1h-3z" fill="#fff"/></svg><svg class="a" style="left:664px;top:180px" width="3" height="2" viewBox="0 0 3 2" shape-rendering="crispEdges"><path d="M1 0h1v1h-1zM0 1h3v1h-3z" fill="#808080"/></svg>
<svg class="a" style="left:665px;top:189px" width="3" height="2" viewBox="0 0 3 2" shape-rendering="crispEdges"><path d="M0 0h3v1h-3zM1 1h1v1h-1z" fill="#fff"/></svg><svg class="a" style="left:664px;top:188px" width="3" height="2" viewBox="0 0 3 2" shape-rendering="crispEdges"><path d="M0 0h3v1h-3zM1 1h1v1h-1z" fill="#808080"/></svg>
<div class="a" style="left:679px;top:176px;width:280px;height:17px;border:1px solid;border-color:#808080 #fff #fff #808080"></div>
<div class="t dis" id="dur" style="left:683px;top:179px;letter-spacing:0.126px;">Длительность задания 6:30</div>
<div class="t dis" style="left:619px;top:227px">Тип задания</div>
<div class="t dis" style="left:706px;top:227px">Выбрать режим</div>
<div class="t dis" style="left:797px;top:227px">Выбрать канал</div>
<div class="sunk" style="left:619px;top:241px;width:84px;height:21px"></div>
<div class="sbtn" style="left:685px;top:243px;width:16px;height:17px"></div>
<svg class="a" style="left:690px;top:250px" width="7" height="4" viewBox="0 0 7 4" shape-rendering="crispEdges"><path d="M0 0h7v1h-7zM1 1h5v1h-5zM2 2h3v1h-3zM3 3h1v1h-1z" fill="#fff"/></svg><svg class="a" style="left:689px;top:249px" width="7" height="4" viewBox="0 0 7 4" shape-rendering="crispEdges"><path d="M0 0h7v1h-7zM1 1h5v1h-5zM2 2h3v1h-3zM3 3h1v1h-1z" fill="#808080"/></svg>
<div class="sunk" style="left:706px;top:241px;width:84px;height:21px"></div>
<div class="sbtn" style="left:772px;top:243px;width:16px;height:17px"></div>
<svg class="a" style="left:777px;top:250px" width="7" height="4" viewBox="0 0 7 4" shape-rendering="crispEdges"><path d="M0 0h7v1h-7zM1 1h5v1h-5zM2 2h3v1h-3zM3 3h1v1h-1z" fill="#fff"/></svg><svg class="a" style="left:776px;top:249px" width="7" height="4" viewBox="0 0 7 4" shape-rendering="crispEdges"><path d="M0 0h7v1h-7zM1 1h5v1h-5zM2 2h3v1h-3zM3 3h1v1h-1z" fill="#808080"/></svg>
<div class="sunk" style="left:797px;top:241px;width:162px;height:21px"></div>
<div class="t g" style="left:800px;top:246px">СТБ</div>
<div class="sbtn" style="left:941px;top:243px;width:16px;height:17px"></div>
<svg class="a" style="left:946px;top:250px" width="7" height="4" viewBox="0 0 7 4" shape-rendering="crispEdges"><path d="M0 0h7v1h-7zM1 1h5v1h-5zM2 2h3v1h-3zM3 3h1v1h-1z" fill="#fff"/></svg><svg class="a" style="left:945px;top:249px" width="7" height="4" viewBox="0 0 7 4" shape-rendering="crispEdges"><path d="M0 0h7v1h-7zM1 1h5v1h-5zM2 2h3v1h-3zM3 3h1v1h-1z" fill="#808080"/></svg>
<div class="t dis" style="left:619px;top:296px">Выбрать устройство</div>
<div class="sunk" style="left:619px;top:309px;width:340px;height:21px"></div>
<div class="sbtn" style="left:941px;top:311px;width:16px;height:17px"></div>
<svg class="a" style="left:946px;top:318px" width="7" height="4" viewBox="0 0 7 4" shape-rendering="crispEdges"><path d="M0 0h7v1h-7zM1 1h5v1h-5zM2 2h3v1h-3zM3 3h1v1h-1z" fill="#fff"/></svg><svg class="a" style="left:945px;top:317px" width="7" height="4" viewBox="0 0 7 4" shape-rendering="crispEdges"><path d="M0 0h7v1h-7zM1 1h5v1h-5zM2 2h3v1h-3zM3 3h1v1h-1z" fill="#808080"/></svg>
<div class="t dis" id="l_prof" style="right:166px;top:336px">Выбрать профиль настроек записи</div>
<div class="sunk" style="left:619px;top:351px;width:340px;height:21px"></div>
<div class="t g" id="pst" style="left:622px;top:356px;letter-spacing:-0.170px;">_My_ASF_XVid_388x288_q3_04.pst</div>
<div class="sbtn" style="left:941px;top:353px;width:16px;height:17px"></div>
<svg class="a" style="left:946px;top:360px" width="7" height="4" viewBox="0 0 7 4" shape-rendering="crispEdges"><path d="M0 0h7v1h-7zM1 1h5v1h-5zM2 2h3v1h-3zM3 3h1v1h-1z" fill="#fff"/></svg><svg class="a" style="left:945px;top:359px" width="7" height="4" viewBox="0 0 7 4" shape-rendering="crispEdges"><path d="M0 0h7v1h-7zM1 1h5v1h-5zM2 2h3v1h-3zM3 3h1v1h-1z" fill="#808080"/></svg>
<div class="t dis" id="l_tmpl" style="left:619px;top:378px;letter-spacing:-0.221px;">Шаблон имени файла</div>
<div class="sunk" style="left:619px;top:393px;width:315px;height:21px"></div>
<div class="t g" id="tmpl" style="left:622px;top:397px;letter-spacing:0.365px;">%channel%(%yy%%mm%%dd%-%hh%%nn%) %tvguide%</div>
<div class="t dis" style="left:942px;top:398px">...</div>
<div class="cb d" style="left:619px;top:449px"></div>
<div class="t dis" style="left:637px;top:449px">Свернуть приложение в трей</div>
<div class="t dis" style="left:619px;top:468px">Завершающее действие</div>
<div class="sunk" style="left:619px;top:483px;width:340px;height:21px"></div>
<div class="t" id="nothing" style="left:623px;top:488px;color:#747474;letter-spacing:0.188px;">Ничего не делать</div>
<div class="sbtn" style="left:941px;top:485px;width:16px;height:17px"></div>
<svg class="a" style="left:946px;top:492px" width="7" height="4" viewBox="0 0 7 4" shape-rendering="crispEdges"><path d="M0 0h7v1h-7zM1 1h5v1h-5zM2 2h3v1h-3zM3 3h1v1h-1z" fill="#fff"/></svg><svg class="a" style="left:945px;top:491px" width="7" height="4" viewBox="0 0 7 4" shape-rendering="crispEdges"><path d="M0 0h7v1h-7zM1 1h5v1h-5zM2 2h3v1h-3zM3 3h1v1h-1z" fill="#808080"/></svg>
<div class="flat" style="left:609px;top:521px;width:360px;height:26px"></div>
<svg class="a" style="left:662px;top:526px" width="17" height="17" viewBox="0 0 17 17"><defs><linearGradient id="sp" x1="0" y1="0" x2="0" y2="1"><stop offset="0.3" stop-color="#fff"/><stop offset="1" stop-color="#cfcfcf"/></linearGradient></defs><path d="M0.500 0.500H9L12.500 4V14.500H0.500Z" fill="url(#sp)" stroke="#8c8c8c"/><path d="M9 0.500V4H12.500" fill="#ececec" stroke="#8c8c8c"/><rect x="6.500" y="6.500" width="9.500" height="9.500" fill="#5a5a5a"/><rect x="8.500" y="7" width="6" height="4.500" fill="#f4f4f4"/><rect x="9" y="13" width="4.500" height="3" fill="#b8b8b8"/><rect x="9.800" y="13.600" width="1.200" height="1.800" fill="#555"/></svg>
<div class="t dis" id="savet" style="left:685px;top:529px;letter-spacing:0.157px;">Сохранить конфигурацию текущего задания</div>
<div class="win" style="left:249px;top:240px;width:490px;height:122px;background:#d4d0c8"></div>
<div class="a" style="left:252px;top:243px;width:484px;height:18px;background:linear-gradient(90deg,#0a246a,#a6caf0)"></div>
<div class="t" id="dttl" style="left:253px;top:246px;font-weight:bold;color:#fff;letter-spacing:0.318px;">Behold TV - Внимание (16)</div>
<div class="btn" style="left:718px;top:245px;width:16px;height:14px"></div>
<svg class="a" style="left:723px;top:249px" width="8" height="7" viewBox="0 0 8 7" shape-rendering="crispEdges"><path d="M0 0h2v1h-2zM6 0h2v1h-2zM1 1h2v1h-2zM5 1h2v1h-2zM2 2h4v1h-4zM3 3h2v1h-2zM2 4h4v1h-4zM1 5h2v1h-2zM5 5h2v1h-2zM0 6h2v1h-2zM6 6h2v1h-2z" fill="#fff"/></svg>
<svg class="a" style="left:722px;top:248px" width="8" height="7" viewBox="0 0 8 7" shape-rendering="crispEdges"><path d="M0 0h2v1h-2zM6 0h2v1h-2zM1 1h2v1h-2zM5 1h2v1h-2zM2 2h4v1h-4zM3 3h2v1h-2zM2 4h4v1h-4zM1 5h2v1h-2zM5 5h2v1h-2zM0 6h2v1h-2zM6 6h2v1h-2z" fill="#808080"/></svg>
<svg class="a" style="left:266px;top:276px" width="38" height="38" viewBox="0 0 38 38">
<defs><radialGradient id="qg" cx="0.320" cy="0.250" r="0.900"><stop offset="0" stop-color="#ffffff"/><stop offset="0.450" stop-color="#e6effb"/><stop offset="0.800" stop-color="#bcd2f0"/><stop offset="1" stop-color="#86a8dc"/></radialGradient><filter id="qb" x="-20%" y="-20%" width="140%" height="140%"><feGaussianBlur stdDeviation="0.700"/></filter></defs>
<g transform="translate(1.200,1.200)" fill="#50555f" opacity="0.750" filter="url(#qb)"><ellipse cx="18.500" cy="15.700" rx="15.600" ry="12.800"/><path d="M16 26.500L22.300 34.200L23.300 26.500Z"/></g>
<path d="M16 26.500L22.300 34.200L23.300 26.500Z" fill="#8fb2e4"/>
<ellipse cx="18.500" cy="15.700" rx="15.600" ry="12.800" fill="url(#qg)"/>
<path d="M17.200 27.800L22 33.500L22.600 27.500Z" fill="#a9c6ee"/>
<text x="19" y="25" text-anchor="middle" font-family="Liberation Serif" font-weight="bold" font-size="25" fill="#13288e">?</text></svg>
<div class="t" id="m1" style="left:314px;top:274px;letter-spacing:0.023px;">До старта следующего задания планировщика осталось менее 3 минут!</div>
<div class="t" id="m2" style="left:314px;top:290px;letter-spacing:0.102px;">Ближайшее задание: 'X-factor', старт в 06.11.16 - 18:50, стоп в 07.11.16 - 03:00</div>
<div class="t" id="m3" style="left:314px;top:306px;letter-spacing:-0.037px;">Отменить переход Windows в спящий(ждущий) режим?</div>
<div class="a" style="left:411px;top:326px;width:75px;height:25px;border:1px solid #000"></div>
<div class="btn" style="left:412px;top:327px;width:73px;height:23px"></div>
<div class="t" style="left:411px;width:75px;text-align:center;top:332px">Да</div>
<div class="btn" style="left:501px;top:326px;width:75px;height:25px"></div>
<div class="t" style="left:501px;width:75px;text-align:center;top:332px">Нет</div>
</body></html>
